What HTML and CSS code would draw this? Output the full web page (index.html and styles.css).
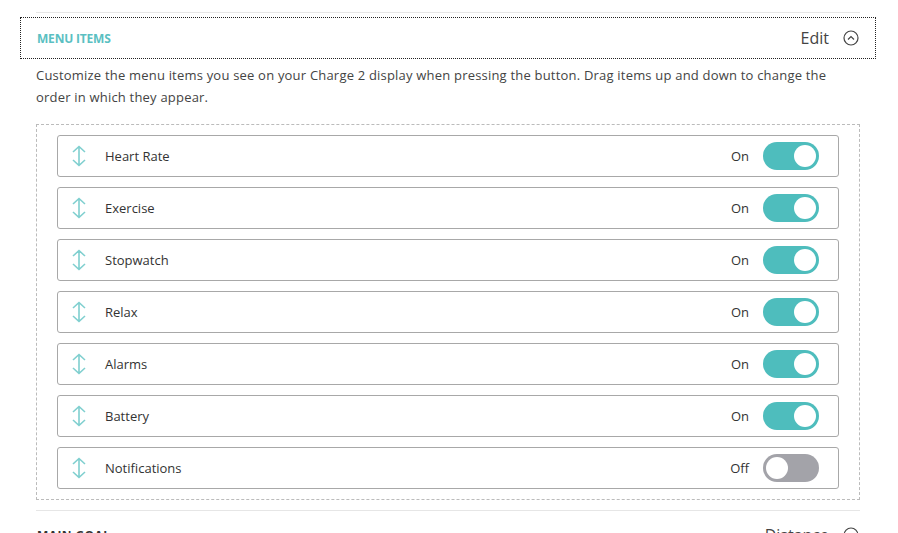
FILE: index.html
```html
<!DOCTYPE html>
<html lang="en">
<head>
  <meta charset="UTF-8">
  <title>Menu Items</title>
  <link rel="stylesheet" href="styles.css">
</head>
<body>

  <div class="settings">

    <!-- Menu Items -->
    <div class="setting">
      <div class="setting-head">
        <span class="setting-title">MENU ITEMS</span>
        <span class="setting-value">Edit</span>
        <svg class="chev" width="16" height="16" viewBox="0 0 16 16">
          <circle cx="8" cy="8" r="7" fill="none" stroke="#444" stroke-width="1.2"/>
          <path d="M5 9.5 L8 6.5 L11 9.5" fill="none" stroke="#444" stroke-width="1.2"/>
        </svg>
      </div>
      <p class="setting-desc">Customize the menu items you see on your Charge 2 display when pressing the button. Drag items up and down to change the order in which they appear.</p>

      <ul class="menu-list">
        <li class="menu-item">
          <svg class="drag" width="16" height="22" viewBox="0 0 16 22"><path d="M8 1.5 V20.5 M2 7 L8 1.5 L14 7 M2 15 L8 20.5 L14 15" fill="none" stroke="#7fcfcf" stroke-width="1.6"/></svg>
          <span class="item-name">Heart Rate</span>
          <span class="item-state">On</span>
          <span class="toggle on"></span>
        </li>
        <li class="menu-item">
          <svg class="drag" width="16" height="22" viewBox="0 0 16 22"><path d="M8 1.5 V20.5 M2 7 L8 1.5 L14 7 M2 15 L8 20.5 L14 15" fill="none" stroke="#7fcfcf" stroke-width="1.6"/></svg>
          <span class="item-name">Exercise</span>
          <span class="item-state">On</span>
          <span class="toggle on"></span>
        </li>
        <li class="menu-item">
          <svg class="drag" width="16" height="22" viewBox="0 0 16 22"><path d="M8 1.5 V20.5 M2 7 L8 1.5 L14 7 M2 15 L8 20.5 L14 15" fill="none" stroke="#7fcfcf" stroke-width="1.6"/></svg>
          <span class="item-name">Stopwatch</span>
          <span class="item-state">On</span>
          <span class="toggle on"></span>
        </li>
        <li class="menu-item">
          <svg class="drag" width="16" height="22" viewBox="0 0 16 22"><path d="M8 1.5 V20.5 M2 7 L8 1.5 L14 7 M2 15 L8 20.5 L14 15" fill="none" stroke="#7fcfcf" stroke-width="1.6"/></svg>
          <span class="item-name">Relax</span>
          <span class="item-state">On</span>
          <span class="toggle on"></span>
        </li>
        <li class="menu-item">
          <svg class="drag" width="16" height="22" viewBox="0 0 16 22"><path d="M8 1.5 V20.5 M2 7 L8 1.5 L14 7 M2 15 L8 20.5 L14 15" fill="none" stroke="#7fcfcf" stroke-width="1.6"/></svg>
          <span class="item-name">Alarms</span>
          <span class="item-state">On</span>
          <span class="toggle on"></span>
        </li>
        <li class="menu-item">
          <svg class="drag" width="16" height="22" viewBox="0 0 16 22"><path d="M8 1.5 V20.5 M2 7 L8 1.5 L14 7 M2 15 L8 20.5 L14 15" fill="none" stroke="#7fcfcf" stroke-width="1.6"/></svg>
          <span class="item-name">Battery</span>
          <span class="item-state">On</span>
          <span class="toggle on"></span>
        </li>
        <li class="menu-item">
          <svg class="drag" width="16" height="22" viewBox="0 0 16 22"><path d="M8 1.5 V20.5 M2 7 L8 1.5 L14 7 M2 15 L8 20.5 L14 15" fill="none" stroke="#7fcfcf" stroke-width="1.6"/></svg>
          <span class="item-name">Notifications</span>
          <span class="item-state">Off</span>
          <span class="toggle"></span>
        </li>
      </ul>
    </div>

    <!-- Main Goal -->
    <div class="setting collapsed">
      <div class="setting-head plain">
        <span class="setting-title dark">MAIN GOAL</span>
        <span class="setting-value">Distance</span>
        <svg class="chev" width="16" height="16" viewBox="0 0 16 16">
          <circle cx="8" cy="8" r="7" fill="none" stroke="#444" stroke-width="1.2"/>
          <path d="M5 6.5 L8 9.5 L11 6.5" fill="none" stroke="#444" stroke-width="1.2"/>
        </svg>
      </div>
    </div>

  </div>

</body>
</html>
```

FILE: styles.css
```css
/* Basic Styling */
* {
  box-sizing: border-box;
  font-family: "Open Sans", Arial, sans-serif;
}
body {
  margin: 0;
  background-color: #fff;
  color: #444;
}

/* Settings list */
.settings {
  padding: 12px 38px 0 36px;
}
.setting {
  border-top: 1px solid #e6e6e6;
}
.setting-head {
  display: flex;
  align-items: center;
  height: 42px;
  margin: 4px -16px 0 -16px;
  padding: 0 16px;
  border: 1px dotted #222;
}
.setting-head.plain {
  border-color: transparent;
  margin-top: 3px;
}
.setting-title {
  flex: 1;
  font-size: 12px;
  font-weight: 700;
  color: #5bbfc2;
  letter-spacing: -0.2px;
}
.setting-title.dark {
  color: #333;
  letter-spacing: 0.4px;
}
.setting-value {
  font-size: 16px;
  color: #444;
  margin-right: 14px;
}
.chev {
  display: block;
}
.setting-desc {
  margin: 5px 0 16px;
  font-size: 13px;
  line-height: 22px;
  color: #444;
  letter-spacing: 0.2px;
}

/* Draggable menu list */
.menu-list {
  list-style: none;
  margin: 0 0 10px;
  padding: 10px 20px 10px 20px;
  border: 1px dashed #bbb;
}
.menu-item {
  display: flex;
  align-items: center;
  height: 42px;
  padding: 0 19px 0 13px;
  border: 1px solid #a8a8a8;
  border-radius: 3px;
}
.menu-item + .menu-item {
  margin-top: 10px;
}
.drag {
  margin-right: 18px;
}
.item-name {
  flex: 1;
  font-size: 13px;
  color: #333;
}
.item-state {
  font-size: 13px;
  color: #333;
  margin-right: 14px;
}

/* Toggle switch */
.toggle {
  position: relative;
  width: 56px;
  height: 28px;
  border-radius: 14px;
  background-color: #a3a3a9;
}
.toggle::after {
  content: "";
  position: absolute;
  top: 3px;
  left: 3px;
  width: 22px;
  height: 22px;
  border-radius: 50%;
  background-color: #fff;
}
.toggle.on {
  background-color: #4ebdbd;
}
.toggle.on::after {
  left: 31px;
}
```
